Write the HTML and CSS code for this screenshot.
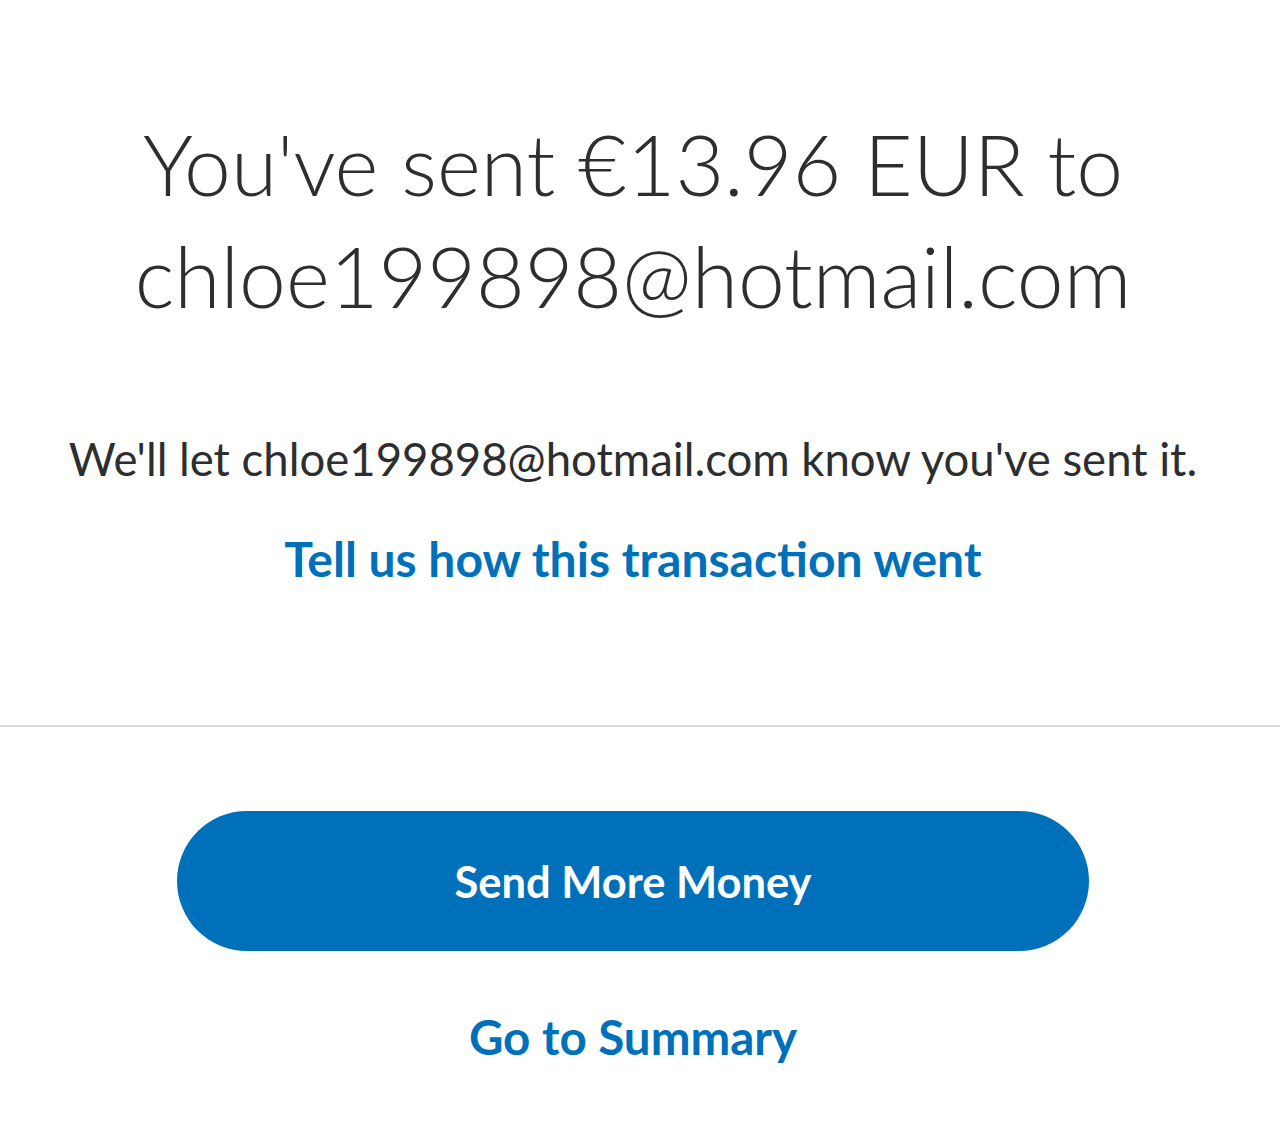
FILE: index.html
```html
<!DOCTYPE html>
<html lang="en">
<head>
<meta charset="utf-8">
<title>Payment sent</title>
<link rel="stylesheet" href="styles.css">
</head>
<body>
<main class="page">
  <section class="top">
    <h1 class="title">You've sent €13.96 EUR to chloe199898@hotmail.com</h1>
    <p class="note">We'll let chloe199898@hotmail.com know you've sent it.</p>
    <a class="link link-feedback" href="#">Tell us how this transaction went</a>
  </section>
  <hr class="divider">
  <section class="actions">
    <a class="btn-primary" href="#">Send More Money</a>
    <a class="link link-summary" href="#">Go to Summary</a>
  </section>
</main>
</body>
</html>
```

FILE: styles.css
```css
html, body {
  margin: 0;
  padding: 0;
  background: #ffffff;
}
body {
  font-family: Lato, "Open Sans", "Liberation Sans", sans-serif;
  color: #2c2e2f;
}
.page {
  width: 1280px;
  min-height: 1132px;
  display: flex;
  flex-direction: column;
}
.top {
  display: flex;
  flex-direction: column;
  align-items: center;
  padding: 108px 14px 0 0;
}
.title {
  margin: 0;
  width: 1010px;
  font-size: 84px;
  line-height: 112px;
  font-weight: 300;
  text-align: center;
  color: #2c2e2f;
}
.note {
  margin: 102px 0 0;
  font-size: 45.5px;
  line-height: 50px;
  font-weight: 400;
  white-space: nowrap;
}
.link {
  color: #0070ba;
  font-weight: 700;
  text-decoration: none;
}
.link-feedback {
  margin-top: 50px;
  font-size: 48px;
  line-height: 50px;
}
.divider {
  margin: 141px 0 0;
  border: 0;
  height: 2px;
  background: #dcdcdc;
}
.actions {
  display: flex;
  flex-direction: column;
  align-items: center;
  padding: 84px 14px 0 0;
}
.btn-primary {
  width: 912px;
  height: 140px;
  border-radius: 70px;
  background: #0070ba;
  color: #ffffff;
  font-weight: 700;
  font-size: 43.5px;
  display: flex;
  align-items: center;
  justify-content: center;
  text-decoration: none;
}
.link-summary {
  margin-top: 61px;
  font-size: 47.5px;
  line-height: 50px;
}
```
